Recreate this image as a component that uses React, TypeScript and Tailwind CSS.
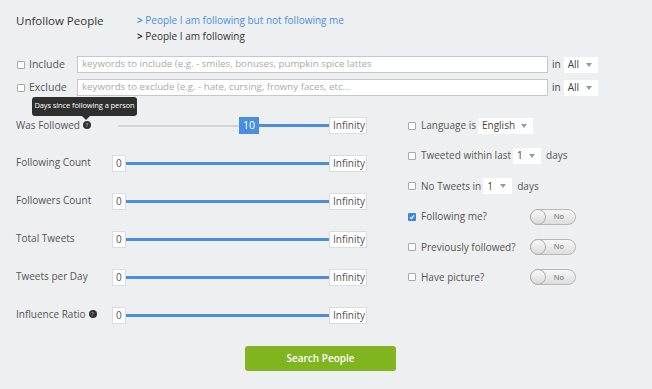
import React from "react";

const Check = ({ checked = false }: { checked?: boolean }) =>
  checked ? (
    <span className="w-[8px] h-[8px] rounded-[1px] bg-[#3b87e0] flex items-center justify-center shrink-0">
      <svg width="6" height="6" viewBox="0 0 6 6">
        <path d="M1 3.2 L2.4 4.6 L5 1.4" stroke="white" strokeWidth="1.2" fill="none" />
      </svg>
    </span>
  ) : (
    <span className="w-[8px] h-[8px] rounded-[1px] border border-[#a9a9a9] bg-white shrink-0" />
  );

const Caret = () => (
  <span className="w-0 h-0 border-l-[3.5px] border-r-[3.5px] border-t-[4px] border-l-transparent border-r-transparent border-t-[#9a9a9a]" />
);

const Select = ({ value, w }: { value: string; w: string }) => (
  <span className={`${w} h-[16px] bg-white flex items-center justify-between pl-[4px] pr-[6px] text-[#444]`}>
    {value}
    <Caret />
  </span>
);

const Help = () => (
  <span className="w-[8px] h-[8px] rounded-full bg-[#333] inline-flex items-center justify-center text-[5px] leading-none text-[#999] font-bold">
    ?
  </span>
);

const Box = ({ children, w }: { children: React.ReactNode; w: string }) => (
  <span className={`${w} h-[17px] bg-white border border-[#dcdcdc] flex items-center pl-[3px] text-[#555] shrink-0`}>
    {children}
  </span>
);

const Slider = ({ label, help }: { label: string; help?: boolean }) => (
  <div className="flex items-center h-[17px]">
    <div className="w-[96px] flex items-center gap-[3px] pb-[3px] shrink-0">
      {label}
      {help && <Help />}
    </div>
    <Box w="w-[14px]">0</Box>
    <span className="flex-1 h-[3px] bg-[#4a8fdf]" />
    <Box w="w-[38px]">Infinity</Box>
  </div>
);

const Toggle = () => (
  <span className="relative w-[46px] h-[16px] rounded-full border border-[#b8b8b8] bg-gradient-to-b from-[#f6f6f6] to-[#dedede] flex items-center justify-end pr-[11px] text-[7.5px] text-[#666]">
    No
    <span className="absolute left-[-1px] top-[-1px] w-[16px] h-[16px] rounded-full border border-[#b0b0b0] bg-gradient-to-b from-[#fafafa] to-[#d8d8d8]" />
  </span>
);

const CheckRow = ({ checked, children }: { checked?: boolean; children: React.ReactNode }) => (
  <div className="flex items-center h-[17px] gap-[5px]">
    <Check checked={checked} />
    {children}
  </div>
);

export default function App() {
  return (
    <div className="w-[652px] h-[389px] bg-[#eeeff1] text-[#555] text-[10px] font-['Open_Sans',sans-serif] overflow-hidden">
      <div className="flex pt-[12px] pl-4 leading-[16px]">
        <div className="w-[121px] mt-[1px] text-[11.5px] text-[#333]">Unfollow People</div>
        <div className="flex flex-col">
          <span className="text-[#4a8fdf]">
            <span className="font-bold">&gt;</span> People I am following but not following me
          </span>
          <span className="text-[#333]">
            <span className="font-bold">&gt;</span> People I am following
          </span>
        </div>
      </div>

      <div className="flex flex-col gap-[6px] mt-[12px] pl-[17px]">
        {[
          ["Include", "keywords to include (e.g. - smiles, bonuses, pumpkin spice lattes"],
          ["Exclude", "keywords to exclude (e.g. - hate, cursing, frowny faces, etc..."],
        ].map(([k, p]) => (
          <div key={k} className="flex items-center h-[17px]">
            <div className="w-[60px] flex items-center gap-[4px] text-[10.5px]">
              <Check />
              {k}
            </div>
            <span className="w-[471px] h-[17px] bg-white border border-[#c8c8c8] flex items-center pl-[4px] text-[#aaa] text-[9.7px] whitespace-nowrap overflow-hidden">
              {p}
            </span>
            <span className="ml-[4px] mr-[3px] text-[#444]">in</span>
            <Select value="All" w="w-[34px]" />
          </div>
        ))}
      </div>

      <div className="flex mt-[21px] pl-4">
        <div className="w-[351px] flex flex-col gap-[21px]">
          <div className="flex items-center h-[17px]">
            <div className="relative w-[96px] flex items-center gap-[3px] pb-[1px] shrink-0">
              Was Followed
              <Help />
              <div className="absolute left-[16px] top-[-21px] w-[105px] h-[19px] rounded-[3px] bg-[#2f2f2f] text-white text-[7.5px] tracking-[-0.1px] flex items-center justify-center whitespace-nowrap">
                Days since following a person
                <span className="absolute left-[50px] bottom-[-4px] w-0 h-0 border-l-[4px] border-r-[4px] border-t-[4px] border-l-transparent border-r-transparent border-t-[#2f2f2f]" />
              </div>
            </div>
            <span className="ml-[6px] w-[121px] h-[2px] bg-[#d4d4d4]" />
            <span className="w-[20px] h-[17px] bg-[#4a8fdf] text-white text-[10.5px] flex items-center justify-center">10</span>
            <span className="flex-1 h-[3px] bg-[#4a8fdf]" />
            <Box w="w-[38px]">Infinity</Box>
          </div>
          <Slider label="Following Count" />
          <Slider label="Followers Count" />
          <Slider label="Total Tweets" />
          <Slider label="Tweets per Day" />
          <Slider label="Influence Ratio" help />
        </div>

        <div className="ml-[41px] flex flex-col gap-[13.4px]">
          <CheckRow>
            <span>Language is</span>
            <Select value="English" w="w-[55px] ml-[-3px]" />
          </CheckRow>
          <CheckRow>
            <span>Tweeted within last</span>
            <Select value="1" w="w-[28px] ml-[-3px]" />
            <span>days</span>
          </CheckRow>
          <CheckRow>
            <span>No Tweets in</span>
            <Select value="1" w="w-[29px] ml-[-3px]" />
            <span>days</span>
          </CheckRow>
          <CheckRow checked>
            <span className="w-[104px]">Following me?</span>
            <Toggle />
          </CheckRow>
          <CheckRow>
            <span className="w-[104px]">Previously followed?</span>
            <Toggle />
          </CheckRow>
          <CheckRow>
            <span className="w-[104px]">Have picture?</span>
            <Toggle />
          </CheckRow>
        </div>
      </div>

      <div className="mt-[22px] ml-[245px]">
        <button className="w-[151px] h-[25px] rounded-[3px] bg-[#80b51f] text-white text-[10px] font-semibold">
          Search People
        </button>
      </div>
    </div>
  );
}
